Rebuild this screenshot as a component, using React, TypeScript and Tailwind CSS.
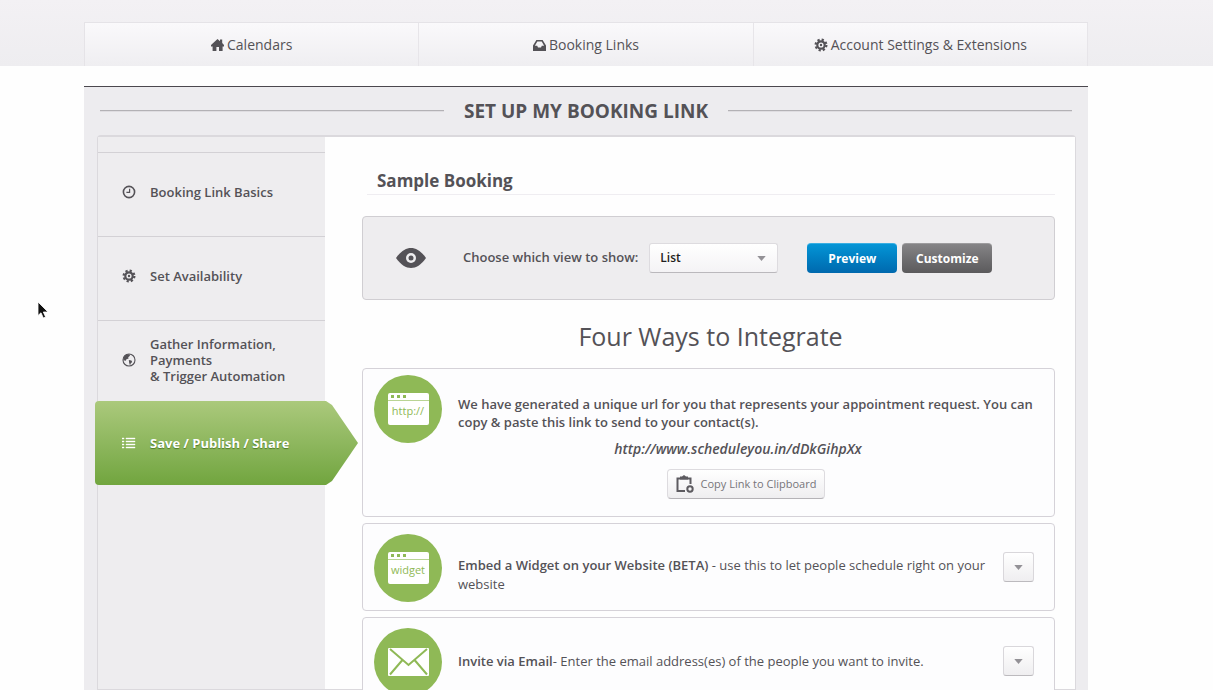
import type { ReactNode } from 'react';

const HomeIcon = () => (
  <svg viewBox="0 0 13 12" className="w-[13px] h-[12px]" fill="currentColor">
    <path d="M6.500 0 9 2.200V.6h2.200v3.500L13 6v1.400h-1.400V12H8V8H5.400v4H1.600V7.400H0V6z" />
  </svg>
);

const InboxIcon = () => (
  <svg viewBox="0 0 13 12" className="w-[13px] h-[12px]" fill="currentColor" fillRule="evenodd">
    <path d="M3.400 1h6.200L13 6.500V12H0V6.500zM4.300 2.500 1.900 6.800h2.300L5 8.500h3l.8-1.700h2.300L8.700 2.500z" />
  </svg>
);

const ClockIcon = () => (
  <svg viewBox="0 0 14 14" className="w-[14px] h-[14px]" fill="none" stroke="currentColor">
    <circle cx="7" cy="7" r="5.6" strokeWidth="1.6" />
    <path d="M7.6 3.8v3.6H4.4" strokeWidth="1.2" />
  </svg>
);

const GearIcon = () => (
  <svg viewBox="0 0 14 14" className="w-[14px] h-[14px]" fill="none" stroke="currentColor">
    <circle cx="7" cy="7" r="5.4" strokeWidth="2.2" strokeDasharray="2.2 2.04" />
    <circle cx="7" cy="7" r="3.7" strokeWidth="2.2" />
    <circle cx="7" cy="7" r="1.2" fill="currentColor" stroke="none" />
  </svg>
);

const GlobeIcon = () => (
  <svg viewBox="0 0 14 14" className="w-[14px] h-[14px]" fill="none" stroke="currentColor">
    <circle cx="7" cy="7" r="6" strokeWidth="1.1" />
    <path d="M1.6 4.6 4 1.6l3.4-.4L8 2.8 6.2 4.2l.4 1.4-2.2.6-.6 1.6-2.4-.6z" fill="currentColor" stroke="none" />
    <path d="m6.8 7 2.6.4.8 1.6-1.4 1.2-.8 2.2-.8-2.4z" fill="currentColor" stroke="none" />
  </svg>
);

const ListIcon = () => (
  <svg viewBox="0 0 14 12" className="w-[14px] h-[12px]" fill="currentColor">
    <path d="M0 1h2v1H0zM0 4h2v1H0zM0 7h2v1H0zM0 10h2v1H0zM4 1h9v1H4zM4 4h9v1H4zM4 7h9v1H4zM4 10h9v1H4z" stroke="currentColor" strokeWidth=".4" />
  </svg>
);

const tabs = [
  { label: 'Calendars', icon: <HomeIcon /> },
  { label: 'Booking Links', icon: <InboxIcon /> },
  { label: 'Account Settings & Extensions', icon: <GearIcon /> },
];

const steps = [
  { lines: ['Booking Link Basics'], icon: <ClockIcon /> },
  { lines: ['Set Availability'], icon: <GearIcon /> },
  { lines: ['Gather Information,', 'Payments', '& Trigger Automation'], icon: <GlobeIcon /> },
  { lines: ['Save / Publish / Share'], icon: <ListIcon />, active: true },
];

const BrowserBadge = ({ text }: { text: string }) => (
  <div className="w-[41px] h-[32px] rounded-xs bg-white text-[#8fb956]">
    <div className="flex items-center gap-[3px] h-[8px] px-[3px] border-b border-[#b9d494]">
      <span className="w-[3px] h-[3px] bg-[#8fb956]" />
      <span className="w-[3px] h-[3px] bg-[#8fb956]" />
      <span className="w-[3px] h-[3px] bg-[#8fb956]" />
    </div>
    <div className="text-center text-[11px] leading-[20px]">{text}</div>
  </div>
);

const Envelope = () => (
  <svg viewBox="0 0 41 28" className="w-[41px] h-[28px]">
    <rect width="41" height="28" rx="1" fill="#fff" />
    <path d="M2 1l18.500 16L39 1M2 26.500l12-14M39 26.500l-12-14" fill="none" stroke="#8fb956" strokeWidth="2" />
  </svg>
);

const Caret = () => (
  <svg viewBox="0 0 10 6" className="w-[9px] h-[5px] pointer-events-none">
    <path d="M0 0h10L5 6z" fill="#939196" />
  </svg>
);

type CardProps = { badge: ReactNode; tall?: boolean; children: ReactNode };

const Card = ({ badge, tall, children }: CardProps) => (
  <section className="flex mb-[6px] pl-[11px] pr-[20px] border border-[#d5d2d8] rounded-[4px] bg-[#fdfdfe]">
    <div className={tall ? 'pt-[6px]' : 'pt-[10px]'}>
      <div className="flex items-center justify-center w-[68px] h-[68px] rounded-full bg-[#8fb956]">
        {badge}
      </div>
    </div>
    {children}
  </section>
);

const ExpandButton = ({ label }: { label: string }) => (
  <button
    aria-label={label}
    className="flex items-center justify-center shrink-0 w-[31px] h-[30px] border border-[#d9d7db] border-b-[#bcbabe] rounded-[3px] bg-linear-to-b from-white to-[#efeef0]"
  >
    <Caret />
  </button>
);

const App = () => {
  return (
    <div className="relative h-screen flex flex-col overflow-hidden bg-[#fefefe] text-[#545257] text-[13px] font-['Open_Sans',sans-serif]">
      <header className="shrink-0 h-[66px] pt-[22px] pl-[84px] pr-[125px] bg-linear-to-b from-[#f3f1f4] to-[#eeedf0]">
        <nav className="grid grid-cols-3 h-[44px] border-t border-l border-[#e5e3e7] bg-linear-to-b from-[#faf9fb] to-[#efeef1]">
          {tabs.map(tab => (
            <a
              key={tab.label}
              href="#"
              className="flex items-center justify-center gap-[3px] border-r border-[#e7e5e9] text-[14px]"
            >
              {tab.icon}
              {tab.label}
            </a>
          ))}
        </nav>
      </header>

      <main className="flex-1 flex flex-col min-h-0 mt-[20px] ml-[84px] mr-[125px] pl-[13px] pr-[12px] border-t border-[#4b484e] bg-[#edecef]">
        <div className="flex items-center gap-[20px] shrink-0 h-[48px] pl-[3px] pr-[4px]">
          <span className="flex-1 h-[2px] border-t border-[#b3b1b5] bg-[#dfdde1]" />
          <h1 className="text-[19px] font-bold">SET UP MY BOOKING LINK</h1>
          <span className="flex-1 h-[2px] border-t border-[#b3b1b5] bg-[#dfdde1]" />
        </div>

        <div className="flex-1 flex min-h-0 border border-t-2 border-[#dbd9dd] rounded-t-[4px]">
          <aside className="shrink-0 w-[227px] pt-[15px] bg-[#eeedef]">
            {steps.map(step => (
              <a
                key={step.lines[0]}
                href="#"
                className={
                  step.active
                    ? 'relative flex items-center h-[84px] -mt-[3px] -ml-[3px] -mr-[33px] pl-[27px] gap-[14px] rounded-l-[4px] bg-linear-to-b from-[#abc97c] to-[#71a53e] text-white font-bold [text-shadow:0_1px_1px_#4f7a28] [clip-path:polygon(0_0,calc(100%_-_32px)_0,calc(100%_-_26px)_4px,100%_50%,calc(100%_-_26px)_calc(100%_-_4px),calc(100%_-_32px)_100%,0_100%)]'
                    : 'flex items-center h-[84px] pb-[6px] pl-[24px] gap-[14px] border-t border-[#d3d1d5] font-semibold'
                }
              >
                {step.icon}
                <span className="leading-[16px]">
                  {step.lines.map(line => (
                    <span key={line} className="block">{line}</span>
                  ))}
                </span>
              </a>
            ))}
          </aside>

          <div className="flex-1 min-w-0 pt-[31px] pl-[37px] pr-[20px] bg-[#fefefe]">
            <h2 className="h-[27px] ml-[5px] pl-[10px] border-b border-[#efedf1] text-[17px] leading-[26px] font-bold">
              Sample Booking
            </h2>

            <div className="flex items-center h-[84px] mt-[21px] pl-[33px] border border-[#d0ced2] rounded-[4px] bg-[#eeedef]">
              <svg viewBox="0 0 30 20" className="shrink-0 w-[30px] h-[20px]">
                <path d="M0 10C5 3 10 0 15 0s10 3 15 10c-5 7-10 10-15 10S5 17 0 10z" fill="#545257" />
                <circle cx="15" cy="10" r="5" fill="#eeedef" />
                <circle cx="15" cy="10" r="2.500" fill="#545257" />
              </svg>
              <label htmlFor="view" className="ml-[37px] font-semibold">Choose which view to show:</label>
              <div className="relative w-[129px] ml-[11px]">
                <select
                  id="view"
                  className="appearance-none block w-full h-[30px] pl-[10px] border border-[#dddbdf] border-b-[#bab8bc] rounded-[3px] bg-linear-to-b from-white to-[#f4f3f5] text-[12px] font-semibold text-[#1f1e20]"
                >
                  <option>List</option>
                </select>
                <span className="absolute right-[12px] top-[13px] pointer-events-none">
                  <Caret />
                </span>
              </div>
              <button className="w-[90px] h-[30px] ml-[29px] rounded-[4px] border-t border-[#38aee2] bg-linear-to-b from-[#0495d6] to-[#0069ae] text-white text-[12px] font-bold">
                Preview
              </button>
              <button className="w-[90px] h-[30px] ml-[5px] rounded-[4px] border-t border-[#9d9c9e] bg-linear-to-b from-[#858486] to-[#5b5a5c] text-white text-[12px] font-bold">
                Customize
              </button>
            </div>

            <h2 className="mt-[16px] mb-[12px] pl-[4px] text-center text-[25px] leading-[40px]">Four Ways to Integrate</h2>

            <Card tall badge={<BrowserBadge text="http://" />}>
              <div className="flex-1 h-[147px] pt-[26px] pl-[16px]">
                <p className="leading-[18px] font-semibold">
                  We have generated a unique url for you that represents your appointment request. You can
                  copy &amp; paste this link to send to your contact(s).
                </p>
                <p className="mt-[9px] pr-[16px] text-center text-[14px] leading-[18px] font-semibold italic">
                  http://www.scheduleyou.in/dDkGihpXx
                </p>
                <button className="flex items-center gap-[7px] h-[30px] mt-[11px] mx-auto px-[8px] border border-[#dddbdf] border-b-[#b5b3b7] rounded-[4px] bg-linear-to-b from-white to-[#efeef0] text-[11px] text-[#77757a]">
                  <svg viewBox="0 0 18 18" className="w-[18px] h-[18px]" fill="none" stroke="#5d5b60">
                    <path d="M9 16H1.500V3.500h13V9" strokeWidth="2" />
                    <path d="M4 4.500v-3h2L8 0l2 1.500h2v3z" fill="#5d5b60" stroke="none" />
                    <circle cx="14" cy="14" r="2.700" strokeWidth="2" />
                  </svg>
                  Copy Link to Clipboard
                </button>
              </div>
            </Card>

            <Card badge={<BrowserBadge text="widget" />}>
              <div className="flex-1 flex items-center h-[86px] pl-[16px]">
                <p className="flex-1 pt-[16px] leading-[19px]">
                  <b className="font-semibold">Embed a Widget on your Website (BETA)</b> - use this to let people schedule right on your website
                </p>
                <ExpandButton label="Embed a widget" />
              </div>
            </Card>

            <Card badge={<Envelope />}>
              <div className="flex-1 flex items-center h-[86px] pl-[16px]">
                <p className="flex-1 leading-[19px]">
                  <b className="font-semibold">Invite via Email</b>- Enter the email address(es) of the people you want to invite.
                </p>
                <ExpandButton label="Invite via email" />
              </div>
            </Card>
          </div>
        </div>
      </main>

      {/* mouse pointer */}
      <svg viewBox="0 0 12 18" className="absolute left-[37px] top-[301px] w-[12px] h-[18px]">
        <path d="M1 1v13.500l3-2.700L6.300 17l2.300-1-2.300-5H11z" fill="#111" stroke="#fff" strokeWidth=".8" />
      </svg>
    </div>
  );
};

export default App;
